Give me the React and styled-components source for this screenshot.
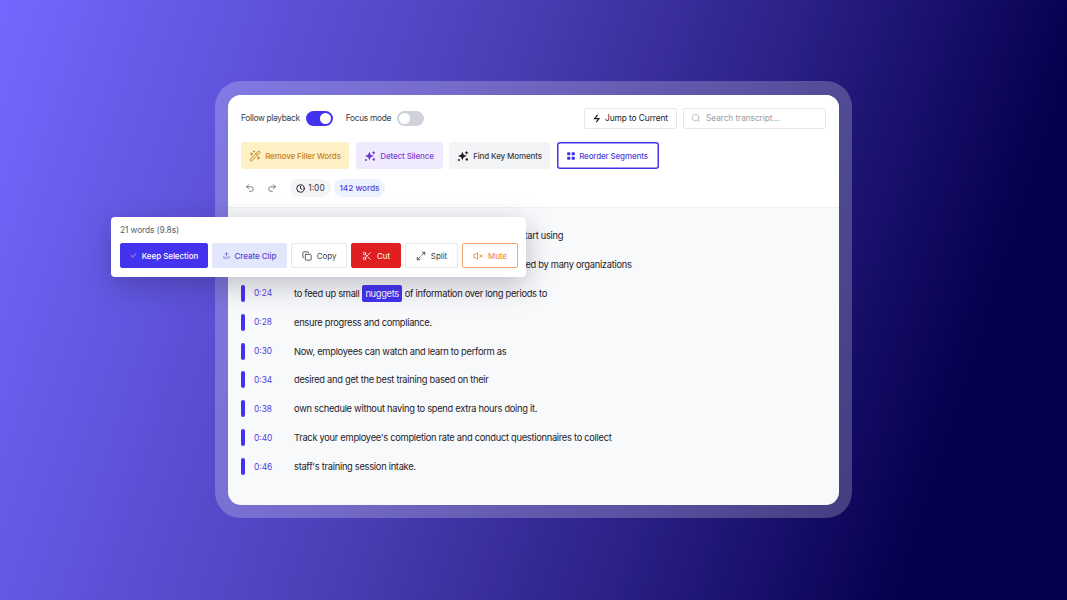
import React from 'react';
import styled, { createGlobalStyle } from 'styled-components';
import { Check, Clock, Copy, Maximize2, Redo2, Scissors, Search, Undo2, Upload, VolumeX, WandSparkles } from 'lucide-react';

const GlobalStyle = createGlobalStyle`
    html, body {
        margin: 0;
        padding: 0;
    }

    body {
        font-family: "Inter", "Noto Sans", sans-serif;
    }
`;

const lines = [
    { time: '0:16', text: 'Microlearning is a really great training method you can start using' },
    { time: '0:20', text: 'It is a popular training format that is now being widely used by many organizations' },
    { time: '0:24', before: 'to feed up small ', word: 'nuggets', after: ' of information over long periods to' },
    { time: '0:28', text: 'ensure progress and compliance.' },
    { time: '0:30', text: 'Now, employees can watch and learn to perform as' },
    { time: '0:34', text: 'desired and get the best training based on their' },
    { time: '0:38', text: 'own schedule without having to spend extra hours doing it.' },
    { time: '0:40', text: "Track your employee's completion rate and conduct questionnaires to collect" },
    { time: '0:46', text: "staff's training session intake." },
];

// four point star with smaller bits round it, used by the detect and find buttons
function SparkleIcon({ color }) {
    return (
        <svg width="12" height="12" viewBox="0 0 12 12" fill={color}>
            <path d="M5.4 1.8 L6.7 4.7 L9.8 6 L6.7 7.3 L5.4 10.2 L4.1 7.3 L1 6 L4.1 4.7 Z" />
            <path d="M9.6 .8 L10.2 2.2 L11.6 2.8 L10.2 3.4 L9.6 4.8 L9 3.4 L7.6 2.8 L9 2.2 Z" />
            <circle cx="9.8" cy="9.4" r="1.2" />
            <circle cx="1.9" cy="10.1" r="1" />
        </svg>
    );
}

function GridIcon() {
    return (
        <svg width="8" height="8" viewBox="0 0 8 8" fill="#3f33e0">
            <rect x="0.2" y="0.2" width="3.1" height="3.1" rx=".6" />
            <rect x="4.7" y="0.2" width="3.1" height="3.1" rx=".6" />
            <rect x="0.2" y="4.7" width="3.1" height="3.1" rx=".6" />
            <rect x="4.7" y="4.7" width="3.1" height="3.1" rx=".6" />
        </svg>
    );
}

function BoltIcon() {
    return (
        <svg width="8" height="9" viewBox="0 0 8 9" fill="none" stroke="#1b1b25" strokeWidth="1.2">
            <path d="M4.6 .8 L1.6 4.6 H6 L3.2 8.2" />
        </svg>
    );
}

export default function App() {
    return (
        <Page>
            <GlobalStyle />
            <Frame>
                <Card>
                    <Header>
                        <TopRow>
                            <ToggleGroup>
                                <ToggleLabel>Follow playback</ToggleLabel>
                                <Toggle $on />
                                <ToggleLabel $spaced>Focus mode</ToggleLabel>
                                <Toggle />
                            </ToggleGroup>
                            <TopActions>
                                <JumpButton><BoltIcon />Jump to Current</JumpButton>
                                <SearchBox><Search size={10} strokeWidth={1.5} />Search transcript...</SearchBox>
                            </TopActions>
                        </TopRow>
                        <ToolRow>
                            <ToolButton $bg="#fdf0c4" $color="#c8821f" $width={108}><WandSparkles size={12} />Remove Filler Words</ToolButton>
                            <ToolButton $bg="#efeafd" $color="#7b45d8" $width={87}><SparkleIcon color="#6d35d4" />Detect Silence</ToolButton>
                            <ToolButton $bg="#f2f4f6" $color="#3a3d46" $width={101}><SparkleIcon color="#1b1b25" />Find Key Moments</ToolButton>
                            <ToolButton $bg="#fff" $color="#4f43dc" $width={102} $outlined><GridIcon />Reorder Segments</ToolButton>
                        </ToolRow>
                        <MetaRow>
                            <HistoryButton><Undo2 size={10} strokeWidth={1.5} /></HistoryButton>
                            <HistoryButton><Redo2 size={10} strokeWidth={1.5} /></HistoryButton>
                            <DurationChip><Clock size={9} strokeWidth={2.6} color="#1b1b25" />1:00</DurationChip>
                            <WordsChip>142 words</WordsChip>
                        </MetaRow>
                    </Header>
                    <Transcript>
                        {lines.map((line) => (
                            <Line key={line.time}>
                                <Marker />
                                <Time>{line.time}</Time>
                                <Text>
                                    {line.text}
                                    {line.word && <>{line.before}<Highlight>{line.word}</Highlight>{line.after}</>}
                                </Text>
                            </Line>
                        ))}
                    </Transcript>
                    <Popover>
                        <Count>21 words (9.8s)</Count>
                        <PopoverActions>
                            <ActionButton $bg="#4433ee" $border="#4433ee" $color="#fff" $width={88} $medium><Check size={7} />Keep Selection</ActionButton>
                            <ActionButton $bg="#e2e7fb" $border="#e2e7fb" $color="#5246cf" $width={75} $medium><Upload size={7} />Create Clip</ActionButton>
                            <ActionButton $bg="#fff" $border="#e5e7eb" $color="#3a3d46" $width={56}><Copy size={10} />Copy</ActionButton>
                            <ActionButton $bg="#e02020" $border="#e02020" $color="#fff" $width={50}><Scissors size={10} />Cut</ActionButton>
                            <ActionButton $bg="#fff" $border="#e5e7eb" $color="#3a3d46" $width={53}><Maximize2 size={10} />Split</ActionButton>
                            <ActionButton $bg="#fff" $border="#f4a56c" $color="#ee7d2c" $width={56}><VolumeX size={10} />Mute</ActionButton>
                        </PopoverActions>
                    </Popover>
                </Card>
            </Frame>
        </Page>
    );
}

const Page = styled.div`
    width: 1067px;
    height: 600px;
    display: flex;
    box-sizing: border-box;
    padding: 81px 215px 82px;
    overflow: hidden;
    background: linear-gradient(108deg, #7268ff 0%, #4c40b8 40%, #2a2085 64%, #060050 86%);
`;

const Frame = styled.div`
    flex: 1;
    padding: 14px 13px 13px;
    border-radius: 26px;
    background: rgba(255, 255, 255, 0.22);
`;

const Card = styled.div`
    position: relative;
    height: 100%;
    display: flex;
    flex-direction: column;
    border-radius: 13px;
    background: #f8f9fb;
`;

const Header = styled.div`
    display: flex;
    flex-direction: column;
    height: 113px;
    box-sizing: border-box;
    padding: 13px 13px 0;
    border-radius: 13px 13px 0 0;
    background: #fff;
    border-bottom: 1px solid #eff0f3;
`;

const TopRow = styled.div`
    display: flex;
    align-items: center;
    justify-content: space-between;
    height: 20px;
`;

const ToggleGroup = styled.div`
    display: flex;
    align-items: center;
`;

const ToggleLabel = styled.span`
    margin-left: ${(props) => (props.$spaced ? '13px' : '0')};
    margin-right: 6px;
    font-size: 8.4px;
    letter-spacing: -0.32px;
    color: #3a3d46;
`;

const Toggle = styled.div`
    position: relative;
    width: 27px;
    height: 15px;
    border-radius: 8px;
    background: ${(props) => (props.$on ? '#4433ee' : '#cfd3d9')};

    &::after {
        content: '';
        position: absolute;
        top: 2px;
        left: ${(props) => (props.$on ? '14px' : '2px')};
        width: 11px;
        height: 11px;
        border-radius: 50%;
        background: #fff;
    }
`;

const TopActions = styled.div`
    display: flex;
    gap: 6px;
`;

const JumpButton = styled.div`
    width: 93px;
    height: 21px;
    box-sizing: border-box;
    display: flex;
    align-items: center;
    justify-content: center;
    gap: 4px;
    border: 1px solid #e5e7eb;
    border-radius: 2px;
    font-size: 8.4px;
    letter-spacing: -0.1px;
    color: #1b1b25;
`;

const SearchBox = styled.div`
    width: 143px;
    height: 21px;
    box-sizing: border-box;
    display: flex;
    align-items: center;
    gap: 5px;
    padding-left: 7px;
    border: 1px solid #e5e7eb;
    border-radius: 2px;
    font-size: 8.4px;
    letter-spacing: -0.1px;
    color: #9a9ea6;
`;

const ToolRow = styled.div`
    display: flex;
    gap: 6.5px;
    margin-top: 14px;
`;

const ToolButton = styled.div`
    width: ${(props) => props.$width}px;
    height: 27px;
    box-sizing: border-box;
    display: flex;
    align-items: center;
    justify-content: center;
    gap: 4px;
    border-radius: 3px;
    box-shadow: ${(props) => (props.$outlined ? 'inset 0 0 0 1.5px #4433ee' : 'none')};
    background: ${(props) => props.$bg};
    color: ${(props) => props.$color};
    font-size: 8px;
    font-weight: 500;
    letter-spacing: -0.13px;
`;

const MetaRow = styled.div`
    display: flex;
    align-items: center;
    margin-top: 10px;
    margin-left: -2px;
`;

const HistoryButton = styled.div`
    width: 22px;
    display: flex;
    justify-content: center;
    color: #3a3d46;
`;

const DurationChip = styled.div`
    margin-left: 7px;
    width: 41px;
    height: 18px;
    display: flex;
    align-items: center;
    justify-content: center;
    gap: 3px;
    border-radius: 9px;
    background: #f2f4f6;
    font-size: 8.4px;
    color: #3a3d46;
`;

const WordsChip = styled.div`
    margin-left: 3px;
    width: 51px;
    height: 18px;
    display: flex;
    align-items: center;
    justify-content: center;
    border-radius: 9px;
    background: #eef2fd;
    font-size: 8.2px;
    font-weight: 500;
    color: #4f43dc;
`;

const Transcript = styled.div`
    display: flex;
    flex-direction: column;
    padding: 13px 13px 0;
`;

const Line = styled.div`
    height: 28.9px;
    display: flex;
    align-items: center;
`;

const Marker = styled.div`
    width: 4px;
    height: 17px;
    border-radius: 2px;
    background: #4433ee;
`;

const Time = styled.span`
    width: 40px;
    margin-left: 9px;
    font-size: 8.4px;
    color: #4f43dc;
`;

const Text = styled.span`
    font-size: 9.3px;
    letter-spacing: -0.28px;
    color: #1f2128;
    white-space: pre-wrap;
`;

const Highlight = styled.span`
    display: inline-block;
    padding: 3px 3.5px;
    border-radius: 2px;
    letter-spacing: -0.3px;
    background: #4433ee;
    color: #fff;
`;

const Popover = styled.div`
    position: absolute;
    left: -117px;
    top: 122px;
    width: 415px;
    height: 60px;
    box-sizing: border-box;
    padding: 8px 8px 8px 9px;
    border-radius: 4px;
    background: #fff;
    box-shadow: 0 8px 28px rgba(20, 20, 50, 0.26);
`;

const Count = styled.div`
    font-size: 8.4px;
    line-height: 11px;
    letter-spacing: -0.1px;
    color: #5a5e68;
`;

const PopoverActions = styled.div`
    display: flex;
    gap: 4px;
    margin-top: 7px;
`;

const ActionButton = styled.div`
    width: ${(props) => props.$width}px;
    height: 25px;
    box-sizing: border-box;
    display: flex;
    align-items: center;
    justify-content: center;
    gap: 5px;
    border: 1px solid ${(props) => props.$border};
    border-radius: 2px;
    background: ${(props) => props.$bg};
    color: ${(props) => props.$color};
    font-size: 8px;
    letter-spacing: -0.05px;
    font-weight: ${(props) => (props.$medium ? 500 : 400)};
`;
